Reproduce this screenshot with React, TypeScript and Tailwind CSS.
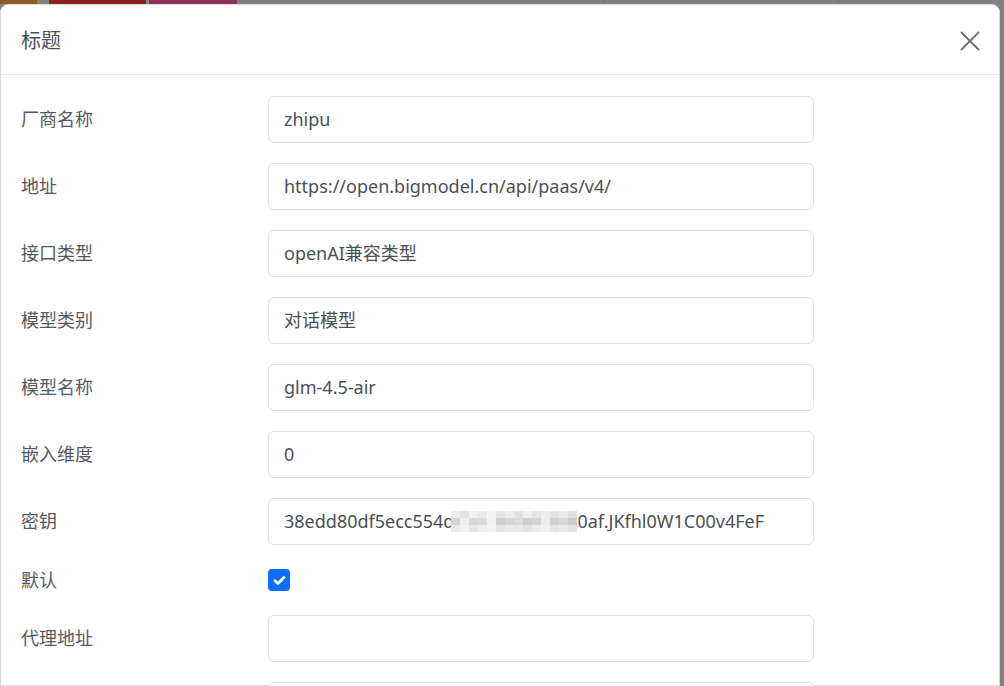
const fields = [
  { label: '厂商名称', value: 'zhipu' },
  { label: '地址', value: 'https://open.bigmodel.cn/api/paas/v4/' },
  { label: '接口类型', value: 'openAI兼容类型' },
  { label: '模型类别', value: '对话模型' },
  { label: '模型名称', value: 'glm-4.5-air' },
  { label: '嵌入维度', value: '0' },
];

// pixelated cells over the hidden part of the key
const mosaic = [
  ['bg-[#ececec]', 'bg-[#e2e2e2]', 'bg-[#f0f0f0]', 'bg-[#e9e9e9]', 'bg-[#f2f2f2]', 'bg-[#e4e4e4]', 'bg-[#ededed]', 'bg-[#e2e2e2]', 'bg-[#efefef]', 'bg-[#e5e5e5]', 'bg-[#ececec]', 'bg-[#e3e3e3]', 'bg-[#eaeaea]', 'bg-[#dfdfdf]'],
  ['bg-[#d4d4d4]', 'bg-[#eeeeee]', 'bg-[#d7d7d7]', 'bg-[#dadada]', 'bg-[#f0f0f0]', 'bg-[#cfcfcf]', 'bg-[#d6d6d6]', 'bg-[#dbdbdb]', 'bg-[#cdcdcd]', 'bg-[#d3d3d3]', 'bg-[#ededed]', 'bg-[#d1d1d1]', 'bg-[#d8d8d8]', 'bg-[#cbcbcb]'],
  ['bg-[#e8e8e8]', 'bg-[#f2f2f2]', 'bg-[#e6e6e6]', 'bg-[#eeeeee]', 'bg-[#f3f3f3]', 'bg-[#e5e5e5]', 'bg-[#eaeaea]', 'bg-[#e7e7e7]', 'bg-[#e2e2e2]', 'bg-[#ececec]', 'bg-[#f1f1f1]', 'bg-[#e4e4e4]', 'bg-[#ebebeb]', 'bg-[#e1e1e1]'],
];

function Field({ label, children }: { label: string; children: React.ReactNode }) {
  return (
    <div className="grid grid-cols-[247px_546px] items-center">
      <div className="text-[18px] leading-[27px] text-[#555a60]">{label}</div>
      {children}
    </div>
  );
}

function Input({ value }: { value?: string }) {
  return (
    <div className="flex h-[47px] items-center rounded-[6px] border border-[#dee2e6] bg-white px-[15px] text-[18px] text-[#4a4f55] whitespace-nowrap overflow-hidden">
      {value}
    </div>
  );
}

export default function App() {
  return (
    <div className="h-[686px] w-[1004px] overflow-hidden bg-[#808080] font-['Noto_Sans','Noto_Sans_CJK_SC',sans-serif]">
      {/* page behind the overlay, only its top edge shows */}
      <div className="flex h-[4px] overflow-hidden">
        <div className="w-[37px] bg-[#8c5b26]" />
        <div className="w-[12px]" />
        <div className="w-[97px] bg-[#8a2020]" />
        <div className="w-[3px]" />
        <div className="w-[88px] bg-[#8b3356]" />
        <div className="w-[367px]" />
        <div className="w-px bg-[#707070]" />
        <div className="w-[233px]" />
        <div className="w-px bg-[#707070]" />
      </div>

      <div className="h-[682px] w-[1000px] rounded-t-[8px] border border-[#d9d9d9] bg-white">
        <div className="flex h-[70px] items-center justify-between border-b border-[#e5e5e5] pl-[20px] pr-[19px]">
          <h1 className="pt-[2px] text-[20px] text-[#4a4f55]">标题</h1>
          <svg viewBox="0 0 20 20" className="mt-[2px] h-[20px] w-[20px]">
            <path d="M1 1L19 19M19 1L1 19" stroke="#6f6f6f" strokeWidth="1.8" fill="none" />
          </svg>
        </div>

        <div className="flex flex-col gap-[20px] px-[20px] pt-[21px]">
          {fields.map((f) => (
            <Field key={f.label} label={f.label}>
              <Input value={f.value} />
            </Field>
          ))}

          <Field label="密钥">
            <div className="flex h-[47px] items-center rounded-[6px] border border-[#dee2e6] bg-white px-[15px] text-[18px] text-[#4a4f55] whitespace-nowrap overflow-hidden">
              <span>38edd80df5ecc554d</span>
              <span className="-ml-[3px] inline-flex flex-col">
                {mosaic.map((row, i) => (
                  <span key={i} className="flex">
                    {row.map((c, j) => (
                      <span key={j} className={`h-[7px] w-[9px] ${c}`} />
                    ))}
                  </span>
                ))}
              </span>
              <span>0af.JKfhl0W1C00v4FeF</span>
            </div>
          </Field>

          <div className="grid h-[30px] grid-cols-[247px_546px] items-center">
            <div className="text-[18px] leading-[27px] text-[#555a60]">默认</div>
            <div className="flex h-[22px] w-[22px] items-center justify-center rounded-[4px] bg-[#0d6efd]">
              <svg viewBox="0 0 16 16" className="h-[15px] w-[15px]">
                <path d="M3.2 8.3l3.1 3 6.4-6.4" fill="none" stroke="white" strokeWidth="3" strokeLinecap="round" strokeLinejoin="round" />
              </svg>
            </div>
          </div>

          <Field label="代理地址">
            <Input />
          </Field>

          <Field label="">
            <Input />
          </Field>
        </div>
      </div>
    </div>
  );
}
